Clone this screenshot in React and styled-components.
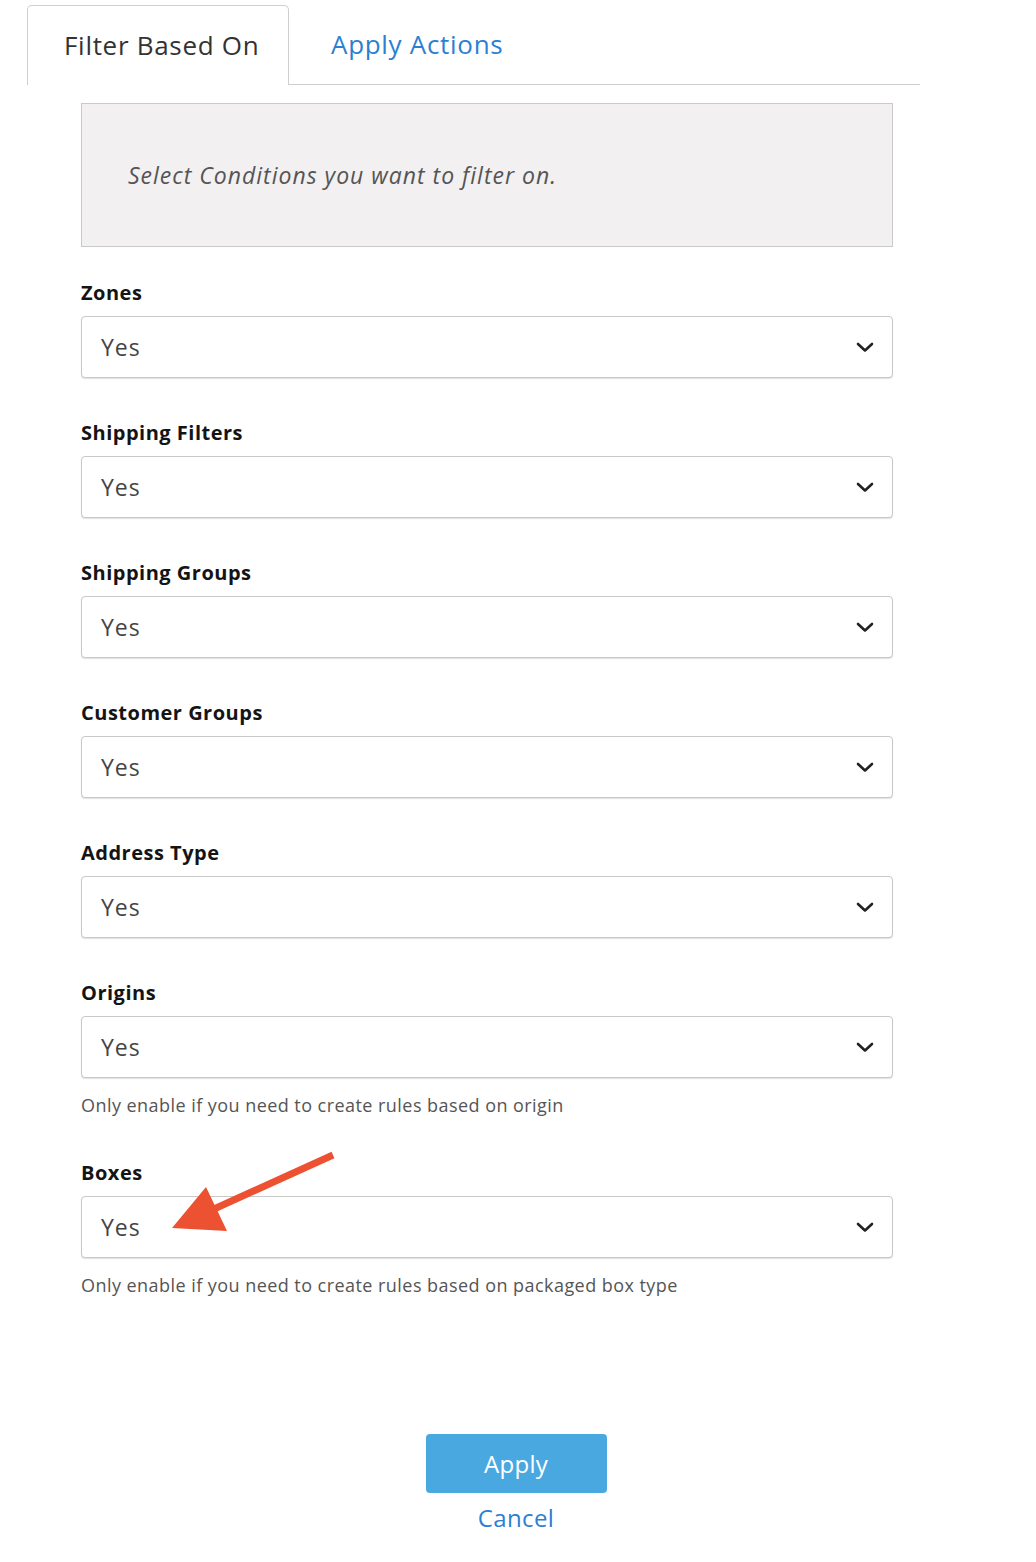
import React from "react";
import styled, { createGlobalStyle } from "styled-components";

const Global = createGlobalStyle`
  html, body { margin: 0; padding: 0; background: #fff; }
  body { font-family: "Open Sans", Lato, Arial, sans-serif; }
  * { box-sizing: border-box; }
`;

const Page = styled.div`
  width: 1036px;
  min-height: 1562px;
  padding: 6px 0 0 27px;
  position: relative;
`;

const TabBar = styled.div`
  display: flex;
  align-items: flex-end;
  width: 893px;
  border-bottom: 1px solid #cfcfcf;
  height: 79px;
`;

const Tab = styled.div`
  height: ${(p) => (p.$active ? "80px" : "78px")};
  margin-bottom: ${(p) => (p.$active ? "-1px" : "0")};
  width: ${(p) => (p.$active ? "262px" : "auto")};
  padding: 0 0 2px ${(p) => (p.$active ? "36px" : "42px")};
  display: flex;
  align-items: center;
  font-size: 26px;
  letter-spacing: 0.7px;
  color: ${(p) => (p.$active ? "#333" : "#2c7fd1")};
  background: #fff;
  border: ${(p) => (p.$active ? "1px solid #cfcfcf" : "none")};
  border-bottom: none;
  border-radius: 5px 5px 0 0;
`;

const Content = styled.div`
  width: 812px;
  margin-left: 54px;
  padding-top: 18px;
`;

const Info = styled.div`
  height: 144px;
  background: #f2f0f1;
  border: 1px solid #cacaca;
  display: flex;
  align-items: center;
  padding: 0 0 0 46px;
  font-style: italic;
  font-size: 23px;
  letter-spacing: 1px;
  color: #555;
`;

const Field = styled.div`
  margin-top: ${(p) => p.$top}px;
`;

const Label = styled.div`
  font-size: 20px;
  font-weight: 700;
  letter-spacing: 0.5px;
  line-height: 24px;
  color: #141414;
  margin-bottom: 11px;
`;

const Select = styled.div`
  height: 62px;
  border: 1px solid #c8c8c8;
  border-radius: 4px;
  box-shadow: 0 1px 1px rgba(0, 0, 0, 0.12);
  display: flex;
  align-items: center;
  justify-content: space-between;
  padding: 0 18px 0 19px;
  font-size: 23px;
  letter-spacing: 1px;
  color: #444;
  background: #fff;
`;

const Help = styled.div`
  margin-top: 16px;
  font-size: 18px;
  letter-spacing: 0.45px;
  line-height: 22px;
  color: #555;
`;

const Actions = styled.div`
  width: 978px;
  display: flex;
  flex-direction: column;
  align-items: center;
  margin-top: 138px;
`;

const Button = styled.button`
  width: 181px;
  height: 59px;
  border: none;
  border-radius: 4px;
  background: #4aa8e0;
  color: #fff;
  font-family: inherit;
  font-size: 24px;
  letter-spacing: 0.3px;
  padding-bottom: 2px;
`;

const Cancel = styled.a`
  margin-top: 10px;
  font-size: 24px;
  letter-spacing: 0.4px;
  color: #2c7fd1;
  line-height: 30px;
`;

const ArrowSvg = styled.svg`
  position: absolute;
  left: 0;
  top: 0;
  pointer-events: none;
`;

const Chevron = () => (
  <svg width="18" height="12" viewBox="0 0 18 12">
    <path d="M2 3 L9 9.5 L16 3" fill="none" stroke="#222" strokeWidth="2.6" strokeLinecap="round" strokeLinejoin="round" />
  </svg>
);

const fields = [
  { label: "Zones", top: 34 },
  { label: "Shipping Filters", top: 43 },
  { label: "Shipping Groups", top: 43 },
  { label: "Customer Groups", top: 43 },
  { label: "Address Type", top: 43 },
  { label: "Origins", top: 43, help: "Only enable if you need to create rules based on origin" },
  { label: "Boxes", top: 45, help: "Only enable if you need to create rules based on packaged box type" },
];

export default function App() {
  return (
    <Page>
      <Global />
      <TabBar>
        <Tab $active>Filter Based On</Tab>
        <Tab>Apply Actions</Tab>
      </TabBar>
      <Content>
        <Info>Select Conditions you want to filter on.</Info>
        {fields.map((f) => (
          <Field key={f.label} $top={f.top}>
            <Label>{f.label}</Label>
            <Select>
              <span>Yes</span>
              <Chevron />
            </Select>
            {f.help && <Help>{f.help}</Help>}
          </Field>
        ))}
      </Content>
      <Actions>
        <Button>Apply</Button>
        <Cancel>Cancel</Cancel>
      </Actions>
      <ArrowSvg width="1036" height="1562" viewBox="0 0 1036 1562">
        <line x1="333" y1="1155" x2="214" y2="1209" stroke="#ec5132" strokeWidth="7" />
        <polygon points="206,1187 172,1228 227,1231" fill="#ec5132" />
      </ArrowSvg>
    </Page>
  );
}
